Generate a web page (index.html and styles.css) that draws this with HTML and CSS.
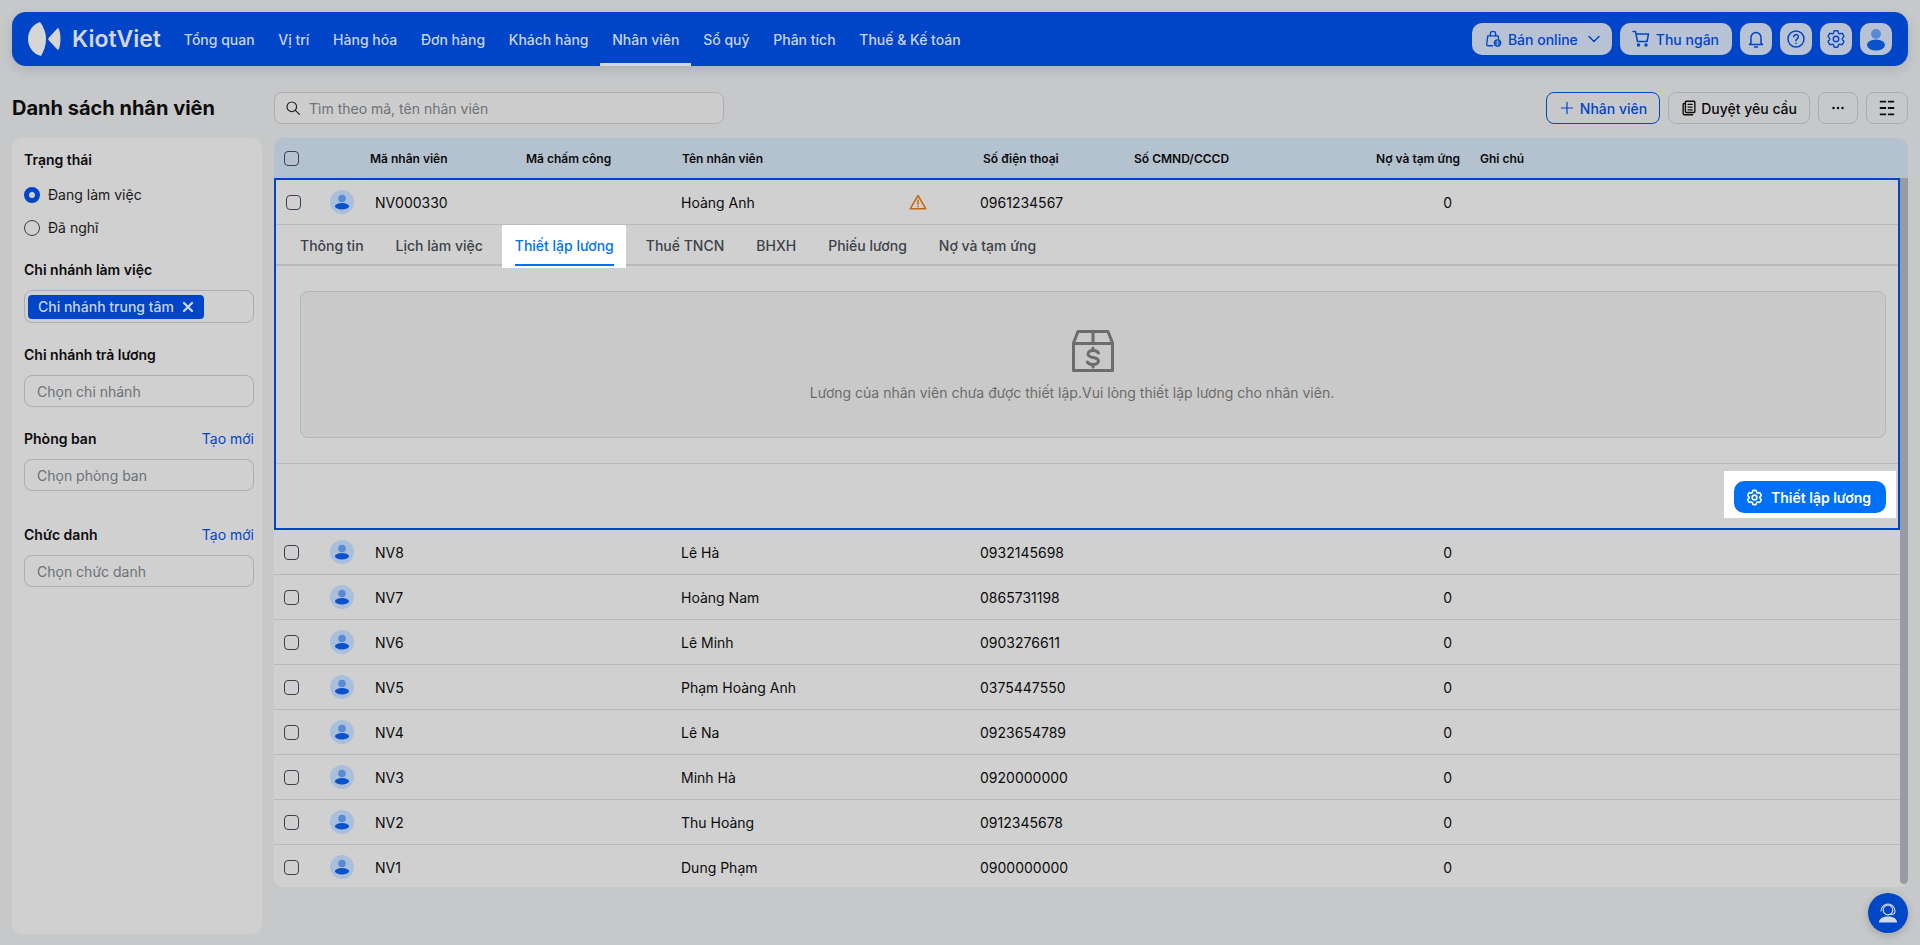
FILE: index.html
```html
<!DOCTYPE html>
<html lang="vi">
<head>
    <meta charset="UTF-8">
    <meta name="viewport" content="width=device-width, initial-scale=1.0">
    <title>KiotViet - Nhân viên</title>
    <link rel="stylesheet" href="styles.css">
</head>
<body>
    <header class="topbar">
        <a href="#" class="logo">
            <svg class="logo-icon" viewBox="0 0 34 34"><path d="M12 0C5 2 0 9 0 17c0 8 5 15 13 17 3-5 5-11 5-17S16 5 12 0z"/><path d="M31 7c2 6 2 14 0 20-.3.8-1 1-1.700.5L21 18.500c-1-1-1-2 0-3l8.300-9c.7-.5 1.400-.3 1.700.5z"/></svg>
            <span>KiotViet</span>
        </a>
        <ul class="nav-links">
            <li><a href="#">Tổng quan</a></li>
            <li><a href="#">Vị trí</a></li>
            <li><a href="#">Hàng hóa</a></li>
            <li><a href="#">Đơn hàng</a></li>
            <li><a href="#">Khách hàng</a></li>
            <li><a href="#" class="active">Nhân viên</a></li>
            <li><a href="#">Sổ quỹ</a></li>
            <li><a href="#">Phân tích</a></li>
            <li><a href="#">Thuế &amp; Kế toán</a></li>
        </ul>
        <div class="nav-actions">
            <a href="#" class="nav-btn online-btn">
                <svg viewBox="0 0 20 20"><path d="M7 6.500V4.500a3 3 0 0 1 6 0v2"/><path d="M9.500 17.500H4.500a1.500 1.500 0 0 1-1.500-1.700l1.200-9.300h11.600l.5 3.500"/><circle cx="15" cy="14.500" r="3.500" fill="currentColor"/><path class="globe" d="M15 11.500v6M13.500 12.500v4M16.500 12.500v4"/></svg>
                Bán online
                <svg class="chev" viewBox="0 0 20 20"><path d="M5 7.500l5 5 5-5"/></svg>
            </a>
            <a href="#" class="nav-btn cashier-btn">
                <svg viewBox="0 0 18 18"><path d="M1 1.500h2.500l2 10h9.500l1.500-7.500H4"/><circle cx="6.500" cy="15" r="1"/><circle cx="14" cy="15" r="1"/></svg>
                Thu ngân
            </a>
            <a href="#" class="nav-btn icon-only"><svg viewBox="0 0 20 20"><path d="M5 14V8.500a5 5 0 0 1 10 0V14l1.500 1.500h-13z"/><path d="M8.500 18h3"/></svg></a>
            <a href="#" class="nav-btn icon-only"><svg viewBox="0 0 20 20"><circle cx="10" cy="10" r="8"/><path d="M7.700 7.800a2.300 2.300 0 1 1 3.500 2c-.8.500-1.200 1-1.200 1.900"/><path d="M10 14.200v.3"/></svg></a>
            <a href="#" class="nav-btn icon-only"><svg class="gear" viewBox="0 0 24 24"><path d="M9.594 3.940c.09-.542.56-.94 1.110-.94h2.593c.55 0 1.020.398 1.110.94l.213 1.281c.063.374.313.686.645.870.074.040.147.083.22.127.324.196.72.257 1.075.124l1.217-.456a1.125 1.125 0 0 1 1.370.49l1.296 2.247a1.125 1.125 0 0 1-.26 1.431l-1.003.827c-.293.24-.438.613-.431.992a6.759 6.759 0 0 1 0 .255c-.007.378.138.75.43.99l1.005.828c.424.35.534.954.26 1.430l-1.298 2.247a1.125 1.125 0 0 1-1.369.491l-1.217-.456c-.355-.133-.75-.072-1.076.124a6.570 6.570 0 0 1-.22.128c-.331.183-.581.495-.644.869l-.213 1.280c-.09.543-.56.941-1.110.941h-2.594c-.55 0-1.020-.398-1.110-.94l-.213-1.281c-.062-.374-.312-.686-.644-.87a6.520 6.520 0 0 1-.22-.127c-.325-.196-.72-.257-1.076-.124l-1.217.456a1.125 1.125 0 0 1-1.369-.49l-1.297-2.247a1.125 1.125 0 0 1 .26-1.431l1.004-.827c.292-.24.437-.613.43-.992a6.932 6.932 0 0 1 0-.255c.007-.378-.138-.75-.43-.99l-1.004-.828a1.125 1.125 0 0 1-.26-1.430l1.297-2.247a1.125 1.125 0 0 1 1.370-.491l1.216.456c.356.133.751.072 1.076-.124.072-.044.146-.087.22-.128.332-.183.582-.495.644-.869l.214-1.281z"/><circle cx="12" cy="12" r="3"/></svg></a>
            <a href="#" class="nav-btn icon-only avatar-btn"><svg class="person" viewBox="0 0 24 24"><circle cx="12" cy="7" r="5" fill="#5a8ad6"/><ellipse cx="12" cy="18" rx="9" ry="5.500" fill="#0a52cc"/></svg></a>
        </div>
    </header>

    <div class="page">
        <div class="page-head">
            <h1>Danh sách nhân viên</h1>
            <div class="search">
                <svg viewBox="0 0 20 20"><circle cx="8.500" cy="8.500" r="6"/><path d="M13 13l5 5"/></svg>
                <span>Tìm theo mã, tên nhân viên</span>
            </div>
            <div class="toolbar">
                <a href="#" class="tool-btn primary"><svg viewBox="0 0 20 20"><path d="M10 3v14M3 10h14"/></svg>Nhân viên</a>
                <a href="#" class="tool-btn review"><svg viewBox="0 0 20 20"><path d="M7 2.500h8.500a1 1 0 0 1 1 1V14a1 1 0 0 1-1 1H7a1 1 0 0 1-1-1V3.500a1 1 0 0 1 1-1z"/><path d="M6 5H4.500a1 1 0 0 0-1 1v10a1.500 1.500 0 0 0 1.500 1.500h9"/><path d="M9 6h4.500M9 9h4.500M9 12h4.500"/></svg>Duyệt yêu cầu</a>
                <a href="#" class="tool-btn square"><svg viewBox="0 0 20 20"><path class="dots" d="M5 10h.1M10 10h.1M15 10h.1"/></svg></a>
                <a href="#" class="tool-btn square wide"><svg viewBox="0 0 20 20"><path class="bars" d="M2 3h7M11 3h7M2 10h7M11 10h7M2 17h7M11 17h7"/></svg></a>
            </div>
        </div>

        <div class="page-body">
            <aside class="sidebar">
                <div class="filter status">
                    <h3>Trạng thái</h3>
                    <div class="radio checked">Đang làm việc</div>
                    <div class="radio">Đã nghĩ</div>
                </div>
                <div class="filter">
                    <h3>Chi nhánh làm việc</h3>
                    <div class="field tag-field">
                        <span class="tag">Chi nhánh trung tâm <svg viewBox="0 0 12 12"><path d="M2 2l8 8M10 2l-8 8"/></svg></span>
                    </div>
                </div>
                <div class="filter">
                    <h3>Chi nhánh trả lương</h3>
                    <div class="field">Chọn chi nhánh</div>
                </div>
                <div class="filter">
                    <h3>Phòng ban <a href="#">Tạo mới</a></h3>
                    <div class="field">Chọn phòng ban</div>
                </div>
                <div class="filter spaced">
                    <h3>Chức danh <a href="#">Tạo mới</a></h3>
                    <div class="field">Chọn chức danh</div>
                </div>
            </aside>

            <main class="table-wrap">
                <div class="table-head">
                    <span class="check"></span>
                    <span>Mã nhân viên</span>
                    <span>Mã chấm công</span>
                    <span>Tên nhân viên</span>
                    <span>Số điện thoại</span>
                    <span>Số CMND/CCCD</span>
                    <span class="num">Nợ và tạm ứng</span>
                    <span class="note">Ghi chú</span>
                </div>
                <div class="table-body">
                    <div class="rows">
                        <div class="detail">
                            <div class="row">
                                <span class="check"></span>
                                <svg class="person" viewBox="0 0 24 24"><circle cx="12" cy="12" r="12" fill="#a9bfdc"/><circle cx="12" cy="8.500" r="3.800" fill="#5a8ad6"/><ellipse cx="12" cy="16.200" rx="7" ry="3.200" fill="#0a52cc"/></svg>
                                <span>NV000330</span>
                                <span>Hoàng Anh</span>
                                <svg class="warn" viewBox="0 0 18 16"><path d="M9 1.500L1.200 14.800h15.600z"/><path d="M9 6v4.500M9 12.400v.4"/></svg>
                                <span>0961234567</span>
                                <span class="num">0</span>
                            </div>
                            <div class="tabs">
                                <a href="#">Thông tin</a>
                                <a href="#">Lịch làm việc</a>
                                <a href="#" class="active"><span>Thiết lập lương</span></a>
                                <a href="#">Thuế TNCN</a>
                                <a href="#">BHXH</a>
                                <a href="#">Phiếu lương</a>
                                <a href="#">Nợ và tạm ứng</a>
                            </div>
                            <div class="tab-pane">
                                <div class="empty">
                                    <svg viewBox="0 0 42 42"><path d="M1.500 13L6 1.500h30L40.500 13v27.500h-39z"/><path d="M1.500 13.500h39M21 1.500v12"/><path class="dollar" d="M26.500 23c-1-1.700-3-2.500-5.500-2.500s-5 1.200-5 3.400c0 4.800 10.500 2.400 10.500 7.200 0 2.300-2.800 3.400-5.500 3.400s-4.800-.9-5.700-2.500M21 18v2.500M21 34.500V37"/></svg>
                                    <p>Lương của nhân viên chưa được thiết lập.Vui lòng thiết lập lương cho nhân viên.</p>
                                </div>
                            </div>
                            <div class="detail-foot">
                                <div class="spot">
                                    <a href="#" class="setup-btn"><svg class="gear" viewBox="0 0 24 24"><path d="M9.594 3.940c.09-.542.56-.94 1.110-.94h2.593c.55 0 1.020.398 1.110.94l.213 1.281c.063.374.313.686.645.870.074.040.147.083.22.127.324.196.72.257 1.075.124l1.217-.456a1.125 1.125 0 0 1 1.370.49l1.296 2.247a1.125 1.125 0 0 1-.26 1.431l-1.003.827c-.293.24-.438.613-.431.992a6.759 6.759 0 0 1 0 .255c-.007.378.138.75.43.99l1.005.828c.424.35.534.954.26 1.430l-1.298 2.247a1.125 1.125 0 0 1-1.369.491l-1.217-.456c-.355-.133-.75-.072-1.076.124a6.570 6.570 0 0 1-.22.128c-.331.183-.581.495-.644.869l-.213 1.280c-.09.543-.56.941-1.110.941h-2.594c-.55 0-1.020-.398-1.110-.94l-.213-1.281c-.062-.374-.312-.686-.644-.87a6.520 6.520 0 0 1-.22-.127c-.325-.196-.72-.257-1.076-.124l-1.217.456a1.125 1.125 0 0 1-1.369-.49l-1.297-2.247a1.125 1.125 0 0 1 .26-1.431l1.004-.827c.292-.24.437-.613.43-.992a6.932 6.932 0 0 1 0-.255c.007-.378-.138-.75-.43-.99l-1.004-.828a1.125 1.125 0 0 1-.26-1.430l1.297-2.247a1.125 1.125 0 0 1 1.370-.491l1.216.456c.356.133.751.072 1.076-.124.072-.044.146-.087.22-.128.332-.183.582-.495.644-.869l.214-1.281z"/><circle cx="12" cy="12" r="3"/></svg>Thiết lập lương</a>
                                </div>
                            </div>
                        </div>
                        <div class="row"><span class="check"></span><svg class="person" viewBox="0 0 24 24"><circle cx="12" cy="12" r="12" fill="#a9bfdc"/><circle cx="12" cy="8.500" r="3.800" fill="#5a8ad6"/><ellipse cx="12" cy="16.200" rx="7" ry="3.200" fill="#0a52cc"/></svg><span>NV8</span><span>Lê Hà</span><i></i><span>0932145698</span><span class="num">0</span></div>
                        <div class="row"><span class="check"></span><svg class="person" viewBox="0 0 24 24"><circle cx="12" cy="12" r="12" fill="#a9bfdc"/><circle cx="12" cy="8.500" r="3.800" fill="#5a8ad6"/><ellipse cx="12" cy="16.200" rx="7" ry="3.200" fill="#0a52cc"/></svg><span>NV7</span><span>Hoàng Nam</span><i></i><span>0865731198</span><span class="num">0</span></div>
                        <div class="row"><span class="check"></span><svg class="person" viewBox="0 0 24 24"><circle cx="12" cy="12" r="12" fill="#a9bfdc"/><circle cx="12" cy="8.500" r="3.800" fill="#5a8ad6"/><ellipse cx="12" cy="16.200" rx="7" ry="3.200" fill="#0a52cc"/></svg><span>NV6</span><span>Lê Minh</span><i></i><span>0903276611</span><span class="num">0</span></div>
                        <div class="row"><span class="check"></span><svg class="person" viewBox="0 0 24 24"><circle cx="12" cy="12" r="12" fill="#a9bfdc"/><circle cx="12" cy="8.500" r="3.800" fill="#5a8ad6"/><ellipse cx="12" cy="16.200" rx="7" ry="3.200" fill="#0a52cc"/></svg><span>NV5</span><span>Phạm Hoàng Anh</span><i></i><span>0375447550</span><span class="num">0</span></div>
                        <div class="row"><span class="check"></span><svg class="person" viewBox="0 0 24 24"><circle cx="12" cy="12" r="12" fill="#a9bfdc"/><circle cx="12" cy="8.500" r="3.800" fill="#5a8ad6"/><ellipse cx="12" cy="16.200" rx="7" ry="3.200" fill="#0a52cc"/></svg><span>NV4</span><span>Lê Na</span><i></i><span>0923654789</span><span class="num">0</span></div>
                        <div class="row"><span class="check"></span><svg class="person" viewBox="0 0 24 24"><circle cx="12" cy="12" r="12" fill="#a9bfdc"/><circle cx="12" cy="8.500" r="3.800" fill="#5a8ad6"/><ellipse cx="12" cy="16.200" rx="7" ry="3.200" fill="#0a52cc"/></svg><span>NV3</span><span>Minh Hà</span><i></i><span>0920000000</span><span class="num">0</span></div>
                        <div class="row"><span class="check"></span><svg class="person" viewBox="0 0 24 24"><circle cx="12" cy="12" r="12" fill="#a9bfdc"/><circle cx="12" cy="8.500" r="3.800" fill="#5a8ad6"/><ellipse cx="12" cy="16.200" rx="7" ry="3.200" fill="#0a52cc"/></svg><span>NV2</span><span>Thu Hoàng</span><i></i><span>0912345678</span><span class="num">0</span></div>
                        <div class="row"><span class="check"></span><svg class="person" viewBox="0 0 24 24"><circle cx="12" cy="12" r="12" fill="#a9bfdc"/><circle cx="12" cy="8.500" r="3.800" fill="#5a8ad6"/><ellipse cx="12" cy="16.200" rx="7" ry="3.200" fill="#0a52cc"/></svg><span>NV1</span><span>Dung Phạm</span><i></i><span>0900000000</span><span class="num">0</span></div>
                    </div>
                    <div class="scrollbar"></div>
                </div>
            </main>
        </div>
    </div>

    <a href="#" class="chat-btn">
        <svg viewBox="0 0 24 24"><circle cx="12" cy="9" r="4.800" fill="none" stroke="#d0d8ea" stroke-width="1.200"/><path d="M5 10a7 7 0 0 1 14 0c0 2-1.500 3.500-3.500 3.500h-3" fill="none" stroke="#d0d8ea" stroke-width="1.200"/><path d="M3 21.500c0-3.500 3-6 9-6s9 2.500 9 6z" fill="#d0d8ea"/></svg>
    </a>
</body>
</html>
```

FILE: styles.css
```css
*, *::before {
    box-sizing: border-box;
}
html, body {
    height: 100%;
}
body {
    font-family: Inter, "Noto Sans", sans-serif;
    font-size: 14px;
    margin: 0;
    padding: 12px;
    background-color: #c7c8ca;
    color: #0c0c0c;
    overflow: hidden;
}
a {
    text-decoration: none;
    color: inherit;
}
svg {
    display: block;
    flex: none;
    fill: none;
    stroke: currentColor;
    stroke-width: 1.5;
    stroke-linecap: round;
    stroke-linejoin: round;
}

/* top bar */
.topbar {
    display: flex;
    align-items: center;
    height: 54px;
    padding: 0 16px;
    background-color: #0044c8;
    border-radius: 14px;
    box-shadow: 0 4px 12px rgba(0,0,0,0.12);
}
.logo {
    display: flex;
    align-items: center;
    gap: 10px;
    width: 144px;
    color: #d3d7df;
    font-size: 23px;
    font-weight: 600;
}
.logo-icon {
    width: 34px;
    height: 34px;
    fill: #d6d6d6;
    stroke: none;
}
.nav-links {
    list-style: none;
    display: flex;
    align-self: stretch;
    margin: 0;
    padding: 0;
    flex: 1;
}
.nav-links a {
    display: flex;
    align-items: center;
    height: 100%;
    padding: 0 11.85px;
    color: #c9d3e6;
    font-weight: 500;
    white-space: nowrap;
}
.nav-links a.active {
    box-shadow: inset 0 -3px 0 #d0d5de;
}
.nav-actions {
    display: flex;
    gap: 8px;
}
.nav-btn {
    display: flex;
    align-items: center;
    gap: 6px;
    height: 32px;
    padding: 0 12px;
    background-color: #b7c3d5;
    border-radius: 10px;
    color: #0044c8;
    font-weight: 500;
}
.nav-btn svg {
    width: 18px;
    height: 18px;
}
.online-btn {
    padding-right: 8px;
}
.cashier-btn {
    padding-right: 13px;
}
.nav-btn .chev {
    width: 20px;
    height: 20px;
}
.globe {
    stroke: #b7c3d5;
    stroke-width: 0.7;
}
.icon-only {
    width: 32px;
    padding: 0;
    justify-content: center;
}
.nav-btn.icon-only svg {
    width: 20px;
    height: 20px;
}
.nav-btn.icon-only svg.gear {
    width: 22px;
    height: 22px;
}
.nav-btn.avatar-btn svg.person {
    width: 24px;
    height: 24px;
    stroke: none;
}

/* title row */
.page-head {
    display: flex;
    align-items: center;
    height: 32px;
    margin-top: 26px;
}
.page-head h1 {
    width: 262px;
    margin: 0;
    font-size: 20px;
    font-weight: 700;
}
.search {
    display: flex;
    align-items: center;
    gap: 8px;
    width: 450px;
    height: 32px;
    padding: 0 10px;
    border: 1px solid #adaeb1;
    border-radius: 8px;
    background-color: #cdcdcd;
    color: #6d7278;
}
.search svg {
    width: 16px;
    height: 16px;
    color: #222;
}
.toolbar {
    display: flex;
    gap: 8px;
    margin-left: auto;
}
.tool-btn {
    display: flex;
    align-items: center;
    gap: 5px;
    height: 32px;
    padding: 0 12px;
    border: 1px solid #adaeb1;
    border-radius: 8px;
    font-weight: 500;
}
.tool-btn svg {
    width: 16px;
    height: 16px;
}
.tool-btn.primary {
    padding-right: 12px;
    border-color: #0044c8;
    color: #0044c8;
}
.tool-btn.review {
    gap: 3px;
    padding-left: 11px;
}
.tool-btn.review svg {
    width: 18px;
    height: 18px;
}
.tool-btn.square {
    width: 40px;
    padding: 0;
    justify-content: center;
}
.tool-btn.wide {
    width: 42px;
}
.tool-btn.square svg {
    width: 18px;
    height: 18px;
}
.dots {
    stroke-width: 2.6;
}
.bars {
    stroke-width: 2;
    stroke-linecap: butt;
}

/* sidebar + table */
.page-body {
    display: flex;
    gap: 12px;
    margin-top: 14px;
}
.sidebar {
    flex: none;
    width: 250px;
    height: 796px;
    padding: 14px 8px 0 12px;
    background-color: #d0d0d0;
    border-radius: 10px;
}
.filter {
    margin-bottom: 24px;
}
.filter.status {
    margin-bottom: 18px;
}
.filter.spaced {
    margin-top: 36px;
}
.filter h3 {
    display: flex;
    justify-content: space-between;
    margin: 0 0 12px;
    font-size: 14px;
    font-weight: 600;
    line-height: 16px;
}
.filter.status h3 {
    margin-bottom: 10px;
}
.filter h3 a {
    color: #0044c8;
    font-weight: 400;
}
.radio {
    display: flex;
    align-items: center;
    gap: 8px;
    height: 33px;
    color: #1a1a1a;
}
.radio::before {
    content: "";
    width: 16px;
    height: 16px;
    border: 1px solid #3a3f47;
    border-radius: 50%;
}
.radio.checked::before {
    border: 5px solid #0044c8;
    background-color: #d0d0d0;
}
.field {
    display: flex;
    align-items: center;
    height: 32px;
    padding: 0 12px;
    border: 1px solid #adaeb1;
    border-radius: 8px;
    color: #6d7278;
}
.tag-field {
    height: 33px;
    padding: 0 3px;
}
.tag {
    display: flex;
    align-items: center;
    gap: 8px;
    height: 24px;
    padding: 0 10px;
    background-color: #0044c8;
    border-radius: 4px;
    color: #c9d3e6;
    font-weight: 500;
}
.tag svg {
    width: 12px;
    height: 12px;
    stroke-width: 2.4;
}

.table-wrap {
    flex: 1;
    min-width: 0;
}
.table-head,
.row {
    display: grid;
    align-items: center;
}
.table-head {
    grid-template-columns: 86px 156px 156px 301px 151px 226px 100px 1fr;
    height: 40px;
    padding-left: 10px;
    background-color: #b4c1cf;
    border-radius: 10px 10px 0 0;
    font-size: 12px;
    font-weight: 600;
}
.table-head .num {
    white-space: nowrap;
}
.table-head .note {
    padding-left: 20px;
}
.table-body {
    display: flex;
    height: 709px;
    overflow: hidden;
    background-color: #d0d0d0;
    border-radius: 0 0 8px 8px;
}
.rows {
    flex: 1;
    min-width: 0;
}
.scrollbar {
    flex: none;
    width: 8px;
    margin-bottom: 3px;
    background-color: #999ba2;
    border-radius: 0 0 4px 4px;
}
.row {
    grid-template-columns: 46px 45px 306px 228px 71px 322px 150px 1fr;
    height: 45px;
    padding-left: 10px;
    border-bottom: 1px solid #b9b9bc;
}
.row > :nth-child(2) {
    width: 24px;
    height: 24px;
    stroke: none;
}
.check {
    display: block;
    width: 15px;
    height: 15px;
    border: 1px solid #39414e;
    border-radius: 4px;
}
.num {
    text-align: right;
}
.warn {
    width: 18px;
    height: 16px;
    color: #c9660f;
}

/* open row */
.detail {
    border: 2px solid #0044c8;
}
.detail .row {
    grid-template-columns: 44px 45px 306px 228px 71px 322px 150px 1fr;
}
.tabs {
    display: flex;
    gap: 32px;
    height: 41px;
    padding: 2px 0 0 24px;
    border-bottom: 2px solid #b9b9bc;
    color: #3d4249;
    font-weight: 500;
}
.tabs a {
    display: flex;
    align-items: center;
}
.tabs a.active {
    align-items: flex-start;
    height: 43px;
    margin: -2px -12px 0 -13px;
    padding: 0 12px 0 13px;
    background-color: #fff;
    color: #0070f4;
}
.tabs a.active span {
    display: flex;
    align-items: center;
    height: 41px;
    padding-top: 2px;
    border-bottom: 2px solid #0070f4;
}
.tab-pane {
    height: 198px;
    padding: 25px 12px 0 24px;
    border-bottom: 1px solid #b9b9bc;
}
.empty {
    display: flex;
    flex-direction: column;
    align-items: center;
    height: 147px;
    padding-top: 38px;
    background-color: #c9c9c9;
    border: 1px solid #b6b6b6;
    border-radius: 8px;
    color: #6c6c6c;
}
.empty svg {
    width: 42px;
    height: 42px;
    stroke-width: 3;
}
.empty .dollar {
    stroke-width: 3;
}
.empty p {
    margin: 12px 42px 0 0;
}
.detail-foot {
    display: flex;
    justify-content: flex-end;
    height: 64px;
    padding: 7px 2px 0 0;
}
.spot {
    height: 47px;
    padding: 10px;
    background-color: #fff;
}
.setup-btn {
    display: flex;
    align-items: center;
    gap: 8px;
    width: 152px;
    height: 32px;
    padding: 0 12px;
    background-color: #0070f4;
    border-radius: 10px;
    color: #fff;
    font-weight: 600;
}
.setup-btn svg {
    width: 19px;
    height: 19px;
    margin-left: -1px;
    margin-right: -1px;
    stroke-width: 2;
}

.chat-btn {
    position: fixed;
    right: 12px;
    bottom: 12px;
    display: flex;
    align-items: center;
    justify-content: center;
    width: 40px;
    height: 40px;
    background-color: #0047c8;
    border-radius: 50%;
    box-shadow: 0 2px 8px rgba(0,0,0,0.2);
}
.chat-btn svg {
    width: 24px;
    height: 24px;
    stroke: none;
}
```
